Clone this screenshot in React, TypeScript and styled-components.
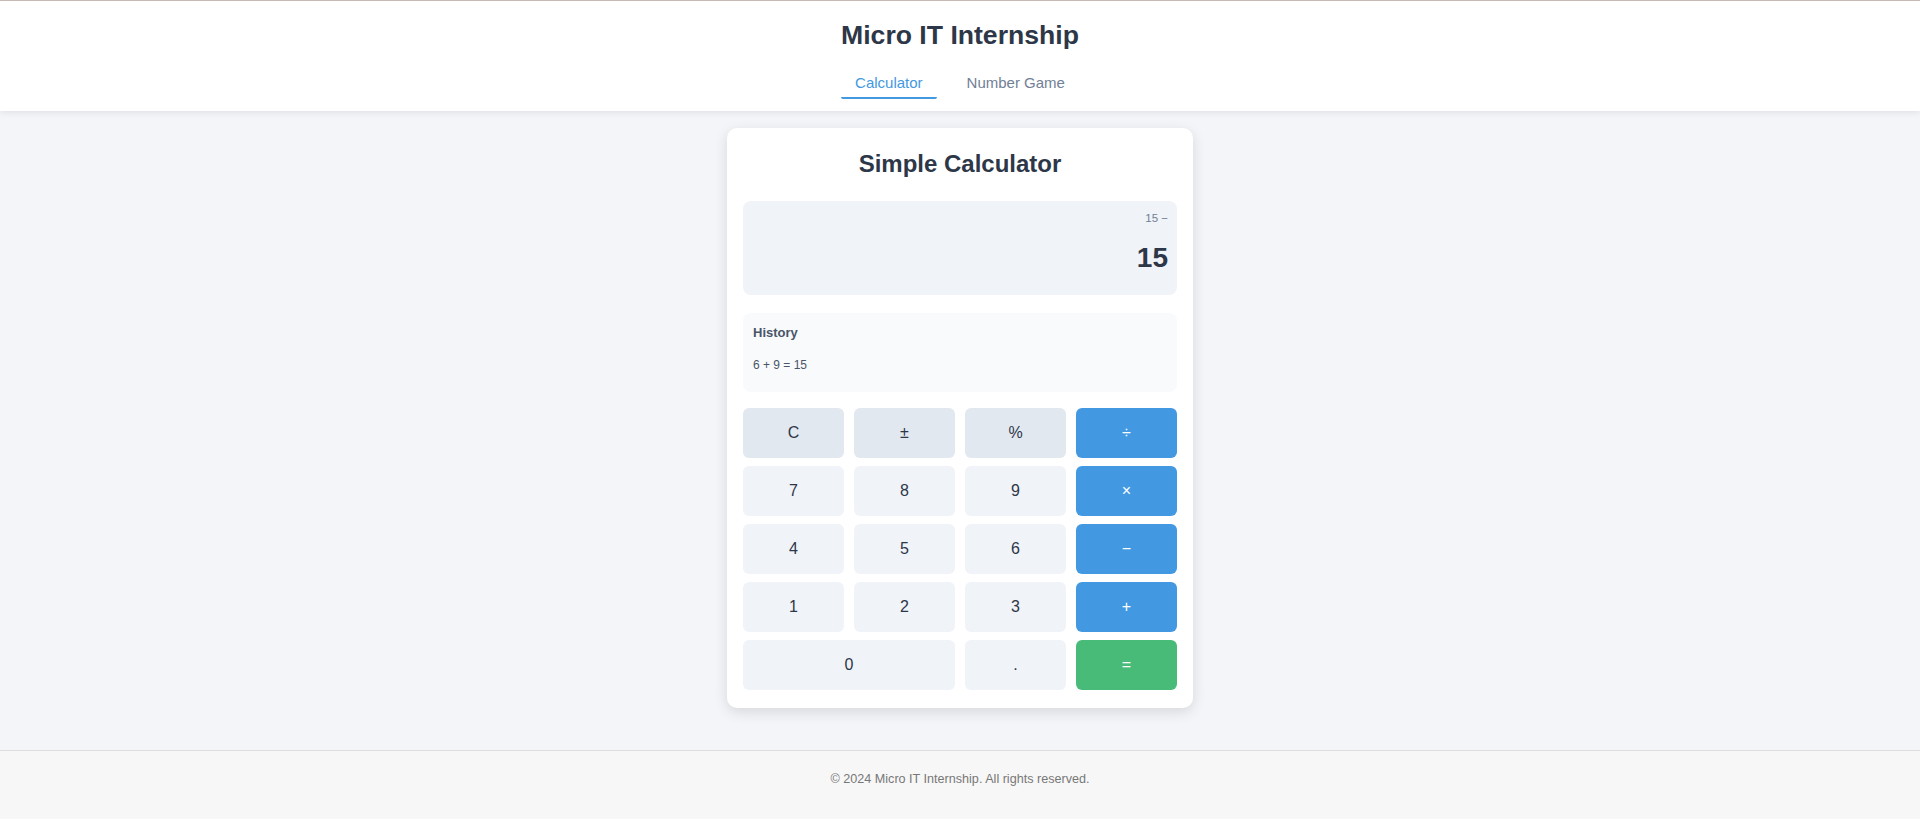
import React from "react";
import styled, { createGlobalStyle } from "styled-components";

const GlobalStyle = createGlobalStyle`
	* {
		box-sizing: border-box;
	}
	html, body {
		margin: 0;
		padding: 0;
		background-color: #f7f7f7;
		font-family: "Liberation Sans", Arial, sans-serif;
	}
`;

const StyledPage = styled.div`
	display: flex;
	flex-direction: column;
	min-height: 100vh;
`;

const StyledHeader = styled.header`
	background-color: #ffffff;
	border-top: 1px solid #c9b9b5;
	box-shadow: 0 2px 6px rgba(0, 0, 0, 0.08);
	display: flex;
	flex-direction: column;
	align-items: center;
	padding: 16px 0 12px;
	position: relative;
	z-index: 1;
`;

const StyledTitle = styled.h1`
	margin: 0;
	font-size: 26.6px;
	font-weight: bold;
	color: #2d3748;
	line-height: 36px;
`;

const StyledNav = styled.nav`
	display: flex;
	gap: 16px;
	margin-top: 18px;
`;

const StyledNavLink = styled.a<{ $active?: boolean }>`
	font-size: 15px;
	line-height: 18px;
	padding: 3px 14px 5px;
	color: ${(p) => (p.$active ? "#4299e1" : "#718096")};
	border-bottom: 2px solid ${(p) => (p.$active ? "#4299e1" : "transparent")};
	border-radius: 2px;
	cursor: pointer;
`;

const StyledMain = styled.main`
	background-color: #f4f5f8;
	display: flex;
	justify-content: center;
	padding: 17px 0 42px;
`;

const StyledCard = styled.div`
	width: 466px;
	background-color: #ffffff;
	border-radius: 10px;
	padding: 16px 16px 18px;
	box-shadow: 0 4px 14px rgba(0, 0, 0, 0.12);
`;

const StyledCardTitle = styled.h2`
	margin: 0 0 17px;
	text-align: center;
	font-size: 24px;
	line-height: 40px;
	font-weight: bold;
	color: #2d3748;
`;

const StyledDisplay = styled.div`
	background-color: #f0f3f8;
	border-radius: 8px;
	height: 94px;
	padding: 9px 9px;
	display: flex;
	flex-direction: column;
	align-items: flex-end;
`;

const StyledPrevious = styled.div`
	font-size: 11.5px;
	line-height: 16px;
	color: #718096;
`;

const StyledCurrent = styled.div`
	margin-top: 15px;
	font-size: 28px;
	line-height: 34px;
	font-weight: bold;
	color: #2d3748;
`;

const StyledHistory = styled.div`
	margin-top: 18px;
	background-color: #f8fafc;
	border-radius: 8px;
	height: 79px;
	padding: 12px 10px;
`;

const StyledHistoryTitle = styled.div`
	font-size: 13px;
	line-height: 16px;
	font-weight: bold;
	color: #4a5568;
`;

const StyledHistoryItem = styled.div`
	margin-top: 16px;
	font-size: 12px;
	line-height: 16px;
	color: #4a5568;
`;

const StyledKeypad = styled.div`
	margin-top: 16px;
	display: grid;
	grid-template-columns: repeat(4, 1fr);
	column-gap: 10px;
	row-gap: 8px;
`;

type Kind = "fn" | "num" | "op" | "eq";

const keyBg: Record<Kind, string> = {
	fn: "#e2e8f0",
	num: "#f0f3f8",
	op: "#4299e1",
	eq: "#48bb78",
};

const StyledKey = styled.button<{ $kind: Kind; $wide?: boolean }>`
	height: 50px;
	border: none;
	border-radius: 6px;
	background-color: ${(p) => keyBg[p.$kind]};
	color: ${(p) => (p.$kind === "op" || p.$kind === "eq" ? "#ffffff" : "#2d3748")};
	font-family: "Liberation Sans", Arial, sans-serif;
	font-size: 16px;
	grid-column: ${(p) => (p.$wide ? "span 2" : "auto")};
	cursor: pointer;
`;

const StyledFooter = styled.footer`
	flex: 1;
	background-color: #f7f7f7;
	border-top: 1px solid #dddddd;
	padding: 20px 0;
	text-align: center;
	font-size: 12.6px;
	line-height: 16px;
	color: #777777;
`;

const keys: { label: string; kind: Kind; wide?: boolean }[] = [
	{ label: "C", kind: "fn" },
	{ label: "±", kind: "fn" },
	{ label: "%", kind: "fn" },
	{ label: "÷", kind: "op" },
	{ label: "7", kind: "num" },
	{ label: "8", kind: "num" },
	{ label: "9", kind: "num" },
	{ label: "×", kind: "op" },
	{ label: "4", kind: "num" },
	{ label: "5", kind: "num" },
	{ label: "6", kind: "num" },
	{ label: "−", kind: "op" },
	{ label: "1", kind: "num" },
	{ label: "2", kind: "num" },
	{ label: "3", kind: "num" },
	{ label: "+", kind: "op" },
	{ label: "0", kind: "num", wide: true },
	{ label: ".", kind: "num" },
	{ label: "=", kind: "eq" },
];

const App: React.FC = () => {
	const [tab, setTab] = React.useState("calculator");

	return (
		<StyledPage>
			<GlobalStyle />
			<StyledHeader>
				<StyledTitle>Micro IT Internship</StyledTitle>
				<StyledNav>
					<StyledNavLink
						$active={tab === "calculator"}
						onClick={() => setTab("calculator")}
					>
						Calculator
					</StyledNavLink>
					<StyledNavLink
						$active={tab === "game"}
						onClick={() => setTab("game")}
					>
						Number Game
					</StyledNavLink>
				</StyledNav>
			</StyledHeader>
			<StyledMain>
				<StyledCard>
					<StyledCardTitle>Simple Calculator</StyledCardTitle>
					<StyledDisplay>
						<StyledPrevious>15 −</StyledPrevious>
						<StyledCurrent>15</StyledCurrent>
					</StyledDisplay>
					<StyledHistory>
						<StyledHistoryTitle>History</StyledHistoryTitle>
						<StyledHistoryItem>6 + 9 = 15</StyledHistoryItem>
					</StyledHistory>
					<StyledKeypad>
						{keys.map((key) => (
							<StyledKey key={key.label} $kind={key.kind} $wide={key.wide}>
								{key.label}
							</StyledKey>
						))}
					</StyledKeypad>
				</StyledCard>
			</StyledMain>
			<StyledFooter>© 2024 Micro IT Internship. All rights reserved.</StyledFooter>
		</StyledPage>
	);
};

export default App;
